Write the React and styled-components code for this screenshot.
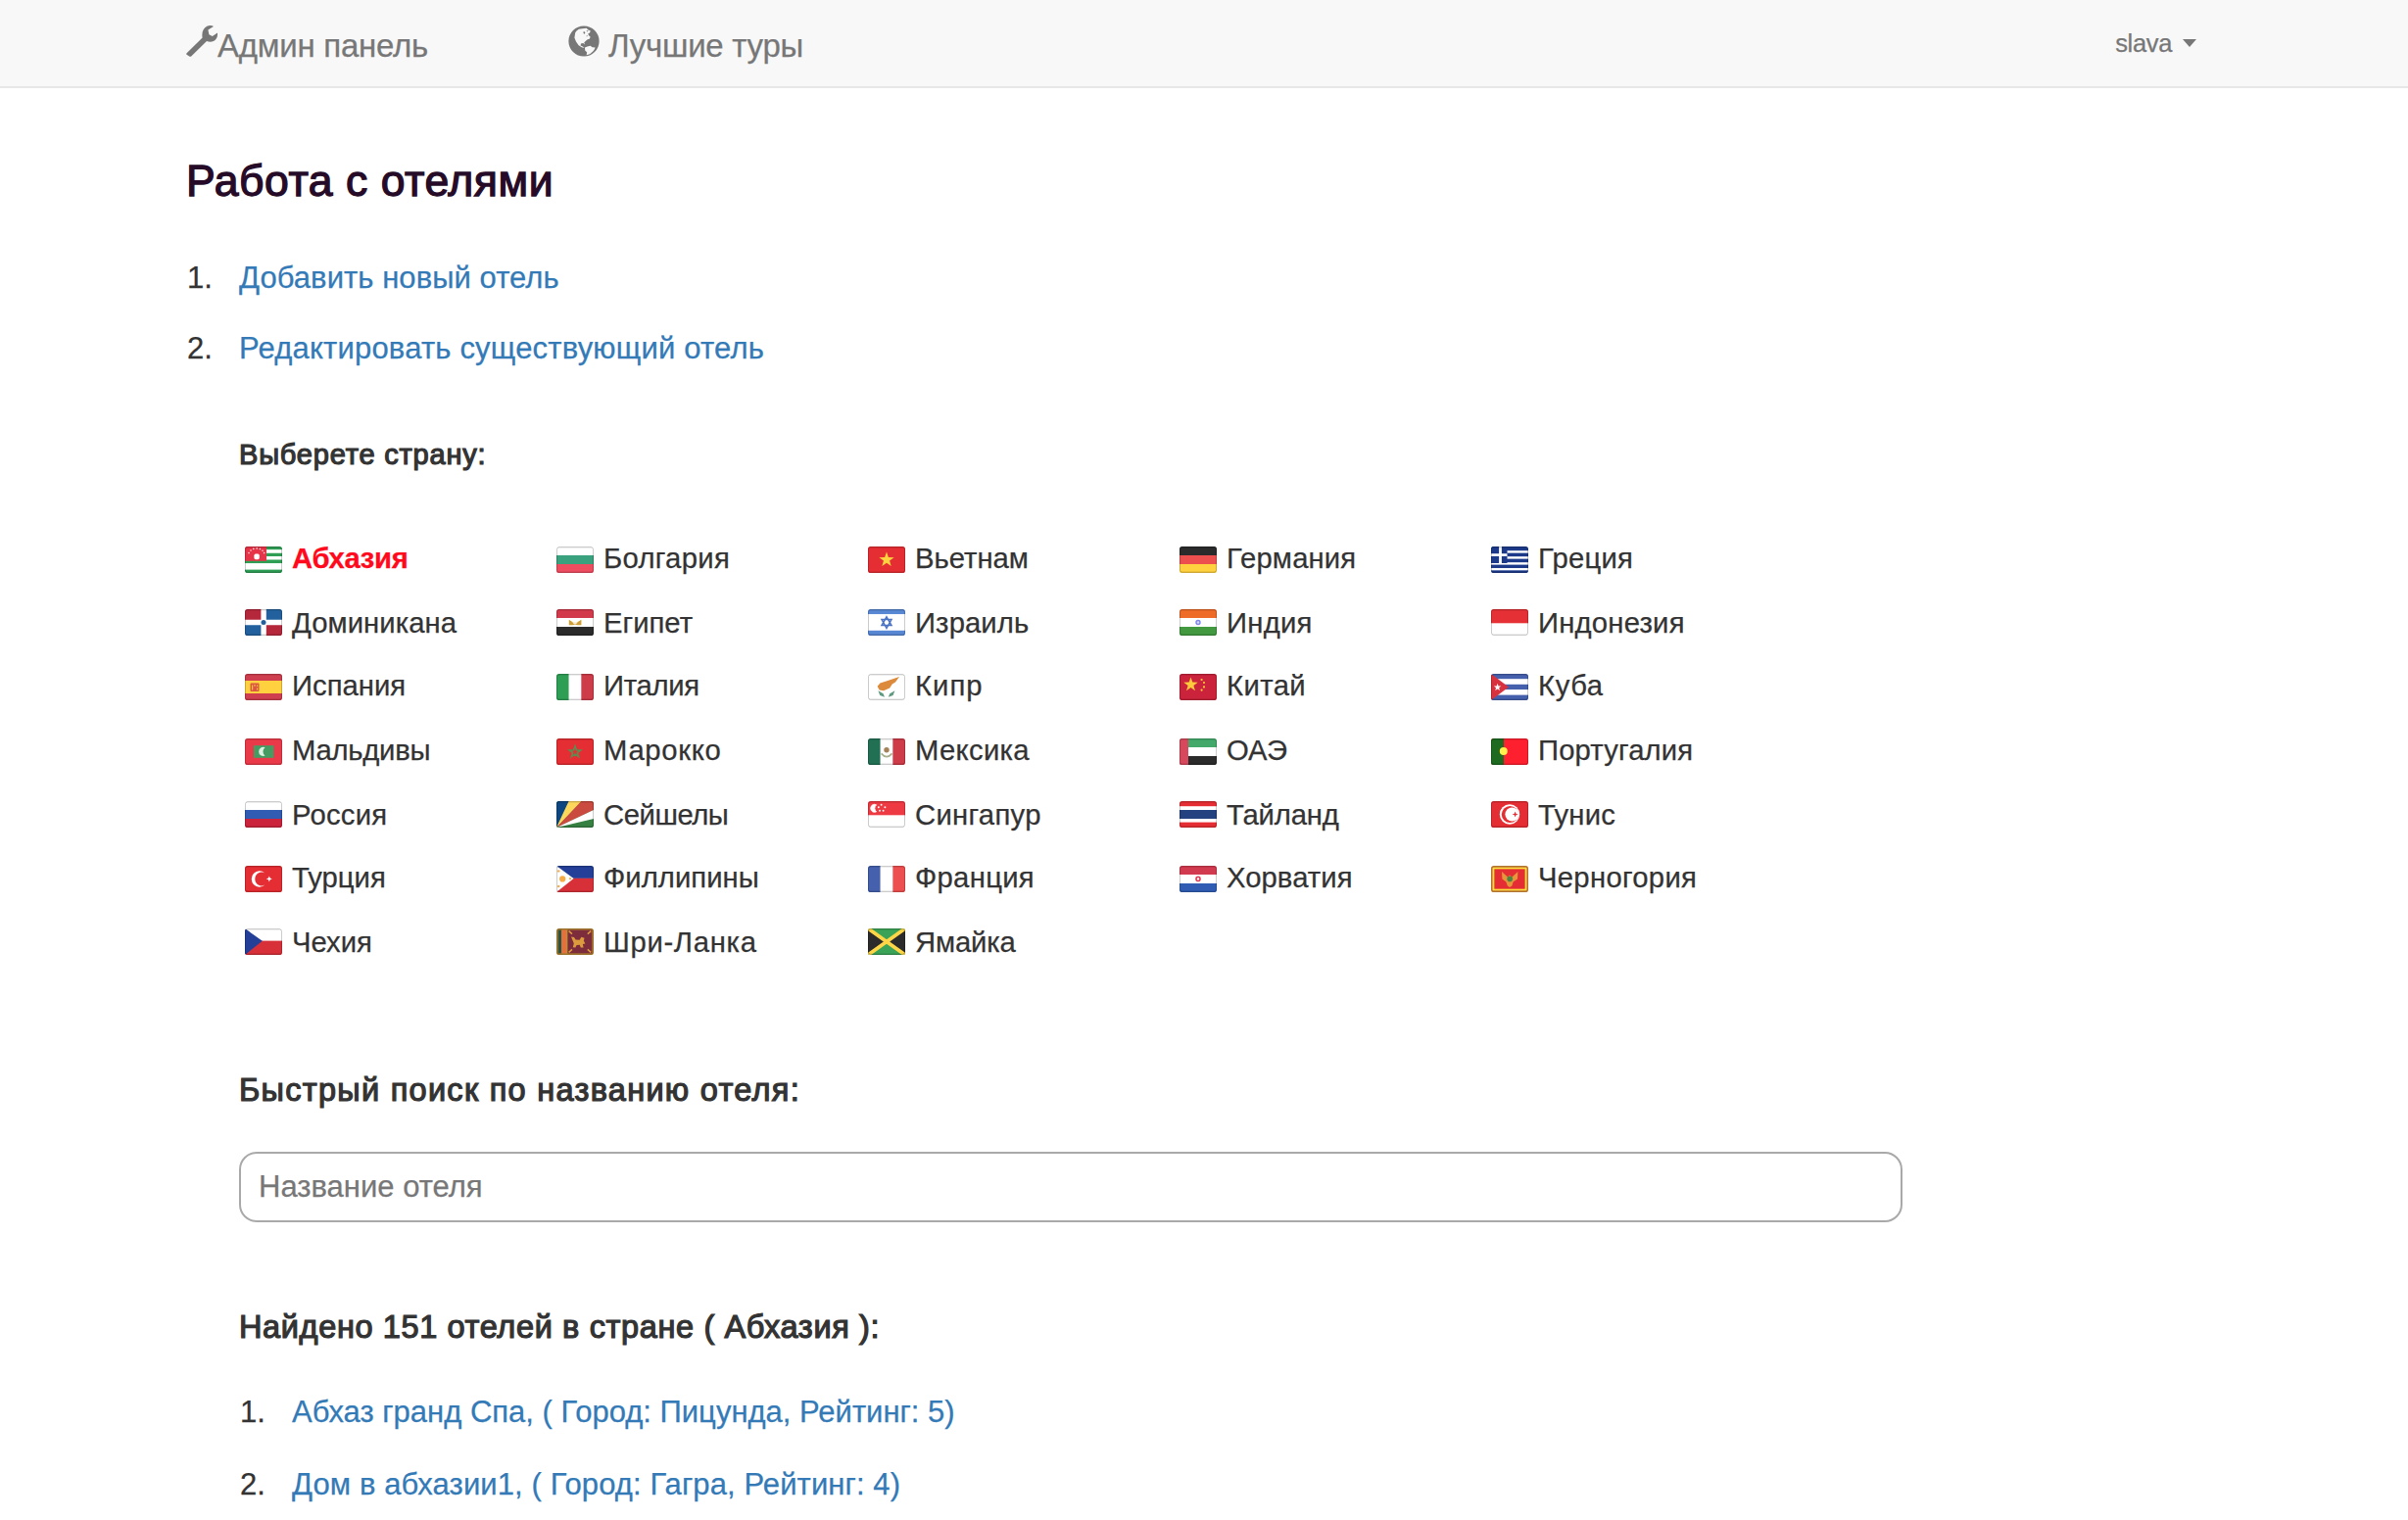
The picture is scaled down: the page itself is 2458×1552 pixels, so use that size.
import React from "react";
import styled, { createGlobalStyle } from "styled-components";

const GlobalStyle = createGlobalStyle`
  *, *::before, *::after { box-sizing: border-box; }
  html, body { margin: 0; padding: 0; background: #fff; }
  body {
    overflow: hidden;
    color: #333;
    font-family: "Liberation Sans", Arial, Helvetica, sans-serif;
    font-size: 31px;
    -webkit-text-stroke: 0.25px currentColor;
  }
`;

/* ---------- Navigation ---------- */

const Navbar = styled.nav`
  display: flex;
  align-items: flex-start;
  height: 90px;
  padding: 0 216px 0 190px;
  background: #f8f8f8;
  border-bottom: 2px solid #e7e7e7;
  color: #777;
`;

const NavLink = styled.a`
  display: flex;
  align-items: flex-start;
  gap: ${(p) => p.$gap || 0}px;
  margin-right: ${(p) => p.$after || 0}px;
  color: inherit;
  text-decoration: none;
  font-size: 33px;
  line-height: 93px;
  letter-spacing: -0.25px;
  white-space: nowrap;

  svg {
    flex: none;
    margin-top: ${(p) => p.$iconTop || 25}px;
  }
`;

const UserMenu = styled.a`
  display: flex;
  align-items: center;
  gap: 11px;
  height: 88px;
  margin-left: auto;
  color: inherit;
  text-decoration: none;
  font-size: 25.5px;
  line-height: 88px;
  letter-spacing: -0.35px;
`;

const Caret = styled.span`
  width: 0;
  height: 0;
  border-top: 8px solid currentColor;
  border-left: 7px solid transparent;
  border-right: 7px solid transparent;
`;

/* ---------- Content ---------- */

const Content = styled.main`
  padding: 70px 190px 0;
`;

const Title = styled.h1`
  margin: 0 0 38px;
  height: 50px;
  color: #260b28;
  font-size: 44.5px;
  font-weight: 400;
  line-height: 50px;
  letter-spacing: 0.55px;
  -webkit-text-stroke: 1.3px currentColor;
`;

const List = styled.ol`
  margin: 0;
  padding: 0;
  list-style: none;
  counter-reset: item;
`;

const ListItem = styled.li`
  display: flex;
  height: ${(p) => p.$height}px;
  line-height: ${(p) => p.$height}px;
  counter-increment: item;

  &::before {
    content: counter(item) ".";
    flex: none;
    width: ${(p) => p.$marker}px;
    padding-left: 1px;
  }
`;

const Link = styled.a`
  color: #337ab7;
  text-decoration: none;
  letter-spacing: ${(p) => p.$tracking || 0}px;
  white-space: nowrap;
`;

const Section = styled.section`
  padding: ${(p) => p.$top}px 0 0 54px;
`;

const Heading = styled.h2`
  margin: 0;
  height: 40px;
  font-size: ${(p) => p.$size}px;
  font-weight: 400;
  line-height: 40px;
  letter-spacing: ${(p) => p.$tracking}px;
  white-space: nowrap;
  -webkit-text-stroke: 1.2px currentColor;
`;

const CountryGrid = styled.div`
  display: grid;
  grid-template-columns: repeat(5, 318px);
  grid-template-rows: 66px 64px 66px 66px 64px 66px 66px;
  margin-top: 53px;
  padding-left: 6px;
`;

const Country = styled.a`
  display: flex;
  align-items: flex-start;
  gap: 10px;
  color: ${(p) => (p.$active ? "#ff0a1c" : "#333")};
  font-size: 29.25px;
  font-weight: ${(p) => (p.$active ? 700 : 400)};
  line-height: 66px;
  letter-spacing: ${(p) => p.$tracking}px;
  white-space: nowrap;
`;

const FlagIcon = styled.svg`
  flex: none;
  width: 38px;
  height: 27px;
  margin-top: ${(p) => (p.$raised ? 19 : 21)}px;
`;

const SearchInput = styled.input`
  display: block;
  width: 1698px;
  height: 72px;
  margin-top: 43px;
  padding: 0 18px;
  border: 2px solid #a9a9a9;
  border-radius: 18px;
  background: #fff;
  color: #333;
  font: inherit;
  -webkit-text-stroke: inherit;
  outline: none;

  &::placeholder {
    color: #777;
    opacity: 1;
  }
`;

/* ---------- Icons ---------- */

const WrenchIcon = () => (
  <svg width="32" height="33" viewBox="0 0 32 33" fill="currentColor">
    <path d="M.6 29.2 16.6 13.6C15.6 8 17.6 3.6 21.3 1.8 23.7.5 26.2.6 28 2L22.4 5.6 23.4 10.3 26.8 12 32 8.6C32.4 12 31 15.5 28 17 25.5 18.2 22.9 17.8 21 17L5.2 32.4C4.6 33 3.8 33 3.2 32.4L.6 30.8C0 30.3 0 29.8.6 29.2Z" />
  </svg>
);

const GlobeIcon = () => (
  <svg width="32" height="32" viewBox="0 0 32 32">
    <circle cx="16" cy="16" r="15.6" fill="#777" />
    <path fill="#f8f8f8" d="M7.2 7.6C8.2 5.8 9.4 4.6 11 3.8L14.4 3.2 18.6 2.8 20.4 4.4 22.8 5.4 22 7.6 20.2 8.4 21 10.2 22.6 11.6 22 13.6 19.4 14.4 17.4 16.2 16.2 17.6 17.2 19.6 15.2 18 13 18.6 12.6 20.4 14.8 21.4 16.6 22.8 14.2 22.6 10.6 20.2 8 16.4 6.4 12.6Z" />
    <path fill="#777" d="M15.2 6.8 16.8 6.2 17.4 7.6 16.2 9ZM18.4 5 20.6 5.6 19.6 6.6ZM18.8 10 20 10.8 18.8 11.6Z" />
    <path fill="#f8f8f8" d="M17 22.6 19.6 21.6 22.6 20.8 24.6 22.2 27.6 22.6C26.8 25.4 24.6 27.8 22 29.2L18.6 30.2 19.2 27.4 17.2 25.4Z" />
  </svg>
);

/* ---------- Flags ---------- */

const Rows = ({ colors }) => {
  const total = colors.reduce((sum, [, size]) => sum + size, 0);
  let y = 0;
  return colors.map(([fill, size], i) => {
    const h = (size / total) * 27;
    const rect = <rect key={i} x="0" y={y} width="38" height={h + 0.1} fill={fill} />;
    y += h;
    return rect;
  });
};

const Cols = ({ colors }) =>
  colors.map((fill, i) => <rect key={i} x={(i * 38) / 3} y="0" width="12.8" height="27" fill={fill} />);

const starPoints = (cx, cy, outer, inner, tips = 5) =>
  Array.from({ length: tips * 2 }, (_, i) => {
    const r = i % 2 ? inner : outer;
    const a = (Math.PI * i) / tips - Math.PI / 2;
    return `${(cx + r * Math.cos(a)).toFixed(2)},${(cy + r * Math.sin(a)).toFixed(2)}`;
  }).join(" ");

const Star = ({ x, y, r, inner = 0.4, tips, ...rest }) => (
  <polygon points={starPoints(x, y, r, r * inner, tips)} {...rest} />
);

const Field = ({ fill }) => <rect width="38" height="27" fill={fill} />;

const FLAGS = {
  abkhazia: (
    <>
      <Rows colors={[["#2f9e55", 1], ["#fff", 1], ["#2f9e55", 1], ["#fff", 1], ["#2f9e55", 1.1], ["#fff", 1.9], ["#2f9e55", 1]]} />
      <rect width="22" height="14.8" fill="#e63347" />
      <rect x="9.4" y="7.6" width="5.4" height="5.6" rx="1.6" fill="#fff" />
      {[[4, 6.6], [6, 4], [8.8, 2.4], [12.2, 1.9], [15.4, 2.6], [18, 4.2], [19.6, 6.6]].map(([x, y]) => (
        <circle key={x} cx={x} cy={y} r="0.8" fill="#fff" fillOpacity="0.85" />
      ))}
    </>
  ),
  bulgaria: <Rows colors={[["#fff", 1], ["#3aa17e", 1], ["#ee4d60", 1]]} />,
  vietnam: (
    <>
      <Field fill="#e52e33" />
      <Star x={19} y={13.6} r={8} fill="#ffd23f" />
    </>
  ),
  germany: <Rows colors={[["#2b2b2b", 1], ["#ec4f4d", 1], ["#ffd13e", 1]]} />,
  greece: (
    <>
      <Rows colors={[["#1d3a8a", 4], ["#fff", 2], ["#1d3a8a", 3.4], ["#fff", 2], ["#1d3a8a", 3.4], ["#fff", 2], ["#1d3a8a", 3.2], ["#fff", 2], ["#1d3a8a", 2.4]]} />
      <rect width="16.5" height="17" fill="#1d3a8a" />
      <path d="M0 8.6H16.5M9.5 0V17" stroke="#fff" strokeWidth="2.8" />
    </>
  ),
  dominicana: (
    <>
      <Field fill="#fff" />
      <path d="M0 0H16.4V10.8H0ZM21.8 16.2H38V27H21.8Z" fill="#b5283c" />
      <path d="M21.8 0H38V10.8H21.8ZM0 16.2H16.4V27H0Z" fill="#22619d" />
      <circle cx="19" cy="13.5" r="2.5" fill="#22619d" />
    </>
  ),
  egypt: (
    <>
      <Rows colors={[["#d23a4b", 1], ["#fff", 1], ["#2b2b2b", 1]]} />
      <path d="M12.8 10.8 17 13.6 19 14.4 21 13.6 25.4 10.8V16.2H21.6L19 15.4 16.4 16.2H12.8Z" fill="#cf9f35" />
      <path d="M16 12.4 19 13.6 22 12.4 20.4 15H17.6Z" fill="#f6ead0" />
    </>
  ),
  israel: (
    <>
      <Rows colors={[["#5887d4", 5.2], ["#fff", 16.6], ["#5887d4", 5.2]]} />
      <path d="M19 7.8 24 16.6H14ZM19 19.4 24 10.6H14Z" fill="none" stroke="#4a73c4" strokeWidth="1.5" />
    </>
  ),
  india: (
    <>
      <Rows colors={[["#ee6b28", 1], ["#fff", 1], ["#42993f", 1]]} />
      <circle cx="19" cy="13.5" r="2" fill="#d7d9f8" stroke="#7e86ee" strokeWidth="1.4" />
    </>
  ),
  indonesia: <Rows colors={[["#e53135", 14.5], ["#fff", 12.5]]} />,
  spain: (
    <>
      <Rows colors={[["#ce3e4e", 7], ["#ffd13e", 13], ["#ce3e4e", 7]]} />
      <rect x="5.5" y="9.5" width="9" height="8.5" rx="1" fill="#d9583f" />
      <path d="M7.6 11.6V16.4M12.6 11.6V13M12.6 14.6V16.4M10 11V12.8" stroke="#ffc13e" strokeWidth="1.2" />
    </>
  ),
  italy: <Cols colors={["#2f9e55", "#fff", "#ce3b49"]} />,
  cyprus: (
    <>
      <Field fill="#fff" />
      <path d="M9.6 12.8 12.4 9.6 18.6 7.4 24.6 5.6 32 3 28 8.4 24.8 10.6 22.2 14.4 16 17.2 11.6 16.4Z" fill="#dc8b3d" />
      <path d="M10.4 17.2 15.6 20.2 17 23.8 12.2 22ZM27.4 17.2 22.2 20.2 20.8 23.8 25.6 22Z" fill="#5f9a80" />
    </>
  ),
  china: (
    <>
      <Field fill="#cb233c" />
      <Star x={11.5} y={11} r={7.6} fill="#ffc93c" />
      {[[22.6, 6], [25, 9], [25, 13.4], [22.6, 16.6]].map(([x, y]) => (
        <circle key={y} cx={x} cy={y} r="1.1" fill="#ffc93c" />
      ))}
    </>
  ),
  cuba: (
    <>
      <Rows colors={[["#4560ad", 1], ["#fff", 1], ["#4560ad", 1], ["#fff", 1], ["#4560ad", 1]]} />
      <path d="M0 0 18 13.5 0 27Z" fill="#d8323e" />
      <Star x={6.6} y={13.8} r={4} fill="#fff" />
    </>
  ),
  maldives: (
    <>
      <Field fill="#ea3a49" />
      <rect x="9" y="7.2" width="20.4" height="12.6" fill="#459c62" />
      <path d="M20.6 9.2A4.6 4.6 0 1 0 20.6 17.6 5.2 5.2 0 0 1 20.6 9.2Z" fill="#dcefe2" />
    </>
  ),
  morocco: (
    <>
      <Field fill="#e52e33" />
      <Star x={19} y={13.8} r={6} fill="none" stroke="#5f8b50" strokeWidth="1.6" />
    </>
  ),
  mexico: (
    <>
      <Cols colors={["#217054", "#fff", "#ce3b49"]} />
      <circle cx="19" cy="11.8" r="2.7" fill="#a5825a" />
      <path d="M13.6 15.4Q19 22 24.6 15.4" fill="none" stroke="#a9b08c" strokeWidth="1.7" />
    </>
  ),
  uae: (
    <>
      <Rows colors={[["#42a96b", 1], ["#fff", 1], ["#2b2b2b", 1]]} />
      <rect width="9" height="27" fill="#d8485d" />
    </>
  ),
  portugal: (
    <>
      <Field fill="#ff202f" />
      <rect width="13" height="27" fill="#1d6a20" />
      <circle cx="12.8" cy="13" r="4" fill="#fff04d" />
    </>
  ),
  russia: <Rows colors={[["#fff", 1], ["#305db3", 1], ["#cb233c", 1]]} />,
  seychelles: (
    <>
      <Field fill="#368042" />
      <path d="M0 27 13 0H0Z" fill="#0e4681" />
      <path d="M0 27 12.6 0H26Z" fill="#fdd75c" />
      <path d="M0 27 25.4 0H38V9Z" fill="#cb4a40" />
      <path d="M0 27 38 9V18Z" fill="#fff" />
    </>
  ),
  singapore: (
    <>
      <Rows colors={[["#ee3a42", 14.5], ["#fff", 12.5]]} />
      <path d="M8.6 3.8A4 4 0 1 0 8.6 10.8 4.4 4.4 0 0 1 8.6 3.8Z" fill="#fff" stroke="#fff" strokeWidth="0.8" />
      {[[13.6, 3.8], [10.8, 6.2], [17.4, 6.2], [12, 9.8], [15.6, 9.8]].map(([x, y]) => (
        <circle key={x} cx={x} cy={y} r="0.95" fill="#fff" />
      ))}
    </>
  ),
  thailand: <Rows colors={[["#e52e33", 5.4], ["#fff", 3.6], ["#23427f", 9], ["#fff", 3.6], ["#e52e33", 5.4]]} />,
  tunisia: (
    <>
      <Field fill="#e52e33" />
      <circle cx="19" cy="13.5" r="10.2" fill="#fff" />
      <circle cx="19.4" cy="13.5" r="8.6" fill="#e52e33" />
      <circle cx="21.4" cy="13.5" r="7" fill="#fff" />
      <Star x={24.6} y={13.5} r={3} tips={4} fill="#e52e33" />
    </>
  ),
  turkey: (
    <>
      <Field fill="#e52e33" />
      <path d="M20.4 7.4A8.2 8.2 0 1 0 20.4 19.6 6.9 6.9 0 1 1 20.4 7.4Z" fill="#fff" />
      <Star x={24.8} y={13.4} r={3} tips={4} fill="#fff" />
    </>
  ),
  philippines: (
    <>
      <Rows colors={[["#233f97", 12.8], ["#d83039", 14.2]]} />
      <path d="M0 0 17.6 13 0 27Z" fill="#fff" />
      <circle cx="6.2" cy="13.4" r="3.1" fill="#f6ab45" />
      <circle cx="2.2" cy="5.4" r="1.2" fill="#f6ab45" />
      <circle cx="2.2" cy="21" r="1.2" fill="#f6ab45" />
      <circle cx="14" cy="13.2" r="1.1" fill="#f6ab45" />
    </>
  ),
  france: <Cols colors={["#4560ad", "#fff", "#ed4f50"]} />,
  croatia: (
    <>
      <Rows colors={[["#d23a4f", 1], ["#fff", 1], ["#305db3", 1]]} />
      <circle cx="19" cy="13.4" r="2" fill="#fff" stroke="#e0405a" strokeWidth="1.6" />
    </>
  ),
  montenegro: (
    <>
      <Field fill="#dc913b" />
      <rect x="2.6" y="2.6" width="32.8" height="21.8" fill="#e52e33" stroke="#fbe03c" strokeWidth="1.5" />
      <path d="M11 6 17 11.4 19 9.6 21.4 11.4 27.4 6 27 13.4 22.6 16.6 21.4 20.6 19 22 16.8 20.6 15.4 16.6 11.4 13.4Z" fill="#e5953a" />
      <circle cx="19.2" cy="13.4" r="2.8" fill="#4e8540" />
    </>
  ),
  czechia: (
    <>
      <Rows colors={[["#fff", 12.6], ["#d83039", 14.4]]} />
      <path d="M0 0 17.8 12.8 0 27Z" fill="#233f97" />
    </>
  ),
  srilanka: (
    <>
      <Field fill="#c08c35" />
      <rect x="1.6" y="1.6" width="3.6" height="23.8" fill="#2b5243" />
      <rect x="5.2" y="1.6" width="4.6" height="23.8" fill="#e5703c" />
      <rect x="11.4" y="1.6" width="25" height="23.8" fill="#7d2c3c" />
      <path d="M15 8.6 18 9 19.6 11.6 23.6 11.8 25.4 8.8 28.6 9.8 27.8 12.6 29.4 15.4 26.8 16 27.6 19.4 24.8 19.6 23.8 16.8 20.6 17 19.4 19.6 16.8 19.2 17.8 15.2Z" fill="#dc9c3d" />
      <path d="M12.6 2.6 16 5.6M35.2 2.6 31.8 5.6M12.6 24.4 16 21.4M35.2 24.4 31.8 21.4" stroke="#dc9c3d" strokeWidth="1.5" />
    </>
  ),
  jamaica: (
    <>
      <Field fill="#3aa357" />
      <path d="M0 0 19 13.5 0 27ZM38 0 19 13.5 38 27Z" fill="#2b2b2b" />
      <path d="M0 0 38 27M38 0 0 27" stroke="#fdd547" strokeWidth="3.8" />
    </>
  ),
};

const Flag = ({ code, raised }) => (
  <FlagIcon viewBox="0 0 38 27" $raised={raised}>
    <defs>
      <clipPath id={`clip-${code}`}>
        <rect width="38" height="27" rx="2.6" />
      </clipPath>
    </defs>
    <g clipPath={`url(#clip-${code})`}>
      {FLAGS[code]}
      <rect x="0.5" y="0.5" width="37" height="26" rx="2.2" fill="none" stroke="#000" strokeOpacity="0.2" />
      <path d="M1 1.5H37M1 25.5H37" stroke="#000" strokeOpacity="0.07" />
    </g>
  </FlagIcon>
);

/* ---------- Data ---------- */

const COUNTRIES = [
  ["abkhazia", "Абхазия", -0.3], ["bulgaria", "Болгария", 0.3], ["vietnam", "Вьетнам", 0], ["germany", "Германия", 0.15], ["greece", "Греция", 0.25],
  ["dominicana", "Доминикана", 0.05], ["egypt", "Египет", 0], ["israel", "Израиль", 0.1], ["india", "Индия"], ["indonesia", "Индонезия", 0.2],
  ["spain", "Испания", 0], ["italy", "Италия", -0.3], ["cyprus", "Кипр", 1], ["china", "Китай", 0.4], ["cuba", "Куба", 0.6],
  ["maldives", "Мальдивы", -0.25], ["morocco", "Марокко", 0.7], ["mexico", "Мексика", 0.3], ["uae", "ОАЭ", 0], ["portugal", "Португалия", 0.15],
  ["russia", "Россия"], ["seychelles", "Сейшелы", -0.45], ["singapore", "Сингапур", 0.3], ["thailand", "Тайланд", -0.15], ["tunisia", "Тунис"],
  ["turkey", "Турция", 0], ["philippines", "Филлипины", 0.05], ["france", "Франция", 0.3], ["croatia", "Хорватия", 0.05], ["montenegro", "Черногория", 0.3],
  ["czechia", "Чехия", 0], ["srilanka", "Шри-Ланка", 0.68], ["jamaica", "Ямайка", -0.15],
];

const RAISED_ROWS = [1, 4, 6];

const HOTELS = [
  "Абхаз гранд Спа, ( Город: Пицунда, Рейтинг: 5)",
  "Дом в абхазии1, ( Город: Гагра, Рейтинг: 4)",
];

export default function App() {
  return (
    <>
      <GlobalStyle />
      <Navbar>
        <NavLink $after={143}>
          <WrenchIcon />
          Админ панель
        </NavLink>
        <NavLink $gap={9} $iconTop={26}>
          <GlobeIcon />
          Лучшие туры
        </NavLink>
        <UserMenu>
          slava
          <Caret />
        </UserMenu>
      </Navbar>

      <Content>
        <Title>Работа с отелями</Title>

        <List>
          <ListItem $height={72} $marker={54}>
            <Link $tracking={0.06}>Добавить новый отель</Link>
          </ListItem>
          <ListItem $height={72} $marker={54}>
            <Link $tracking={0.19}>Редактировать существующий отель</Link>
          </ListItem>
        </List>

        <Section $top={52}>
          <Heading $size={29} $tracking={0.8}>Выберете страну:</Heading>
          <CountryGrid>
            {COUNTRIES.map(([code, name, tracking = 0.25], i) => (
              <Country key={code} $active={i === 0} $tracking={tracking}>
                <Flag code={code} raised={RAISED_ROWS.includes(Math.floor(i / 5))} />
                {name}
              </Country>
            ))}
          </CountryGrid>
        </Section>

        <Section $top={98}>
          <Heading $size={32.5} $tracking={1.28}>Быстрый поиск по названию отеля:</Heading>
          <SearchInput placeholder="Название отеля" />
        </Section>

        <Section $top={87}>
          <Heading $size={32.5} $tracking={0.63}>Найдено 151 отелей в стране ( Абхазия ):</Heading>
        </Section>
        <Section $top={30}>
          <List>
            {HOTELS.map((hotel, i) => (
              <ListItem key={hotel} $height={74} $marker={54}>
                <Link $tracking={i * 0.1}>{hotel}</Link>
              </ListItem>
            ))}
          </List>
        </Section>
      </Content>
    </>
  );
}
